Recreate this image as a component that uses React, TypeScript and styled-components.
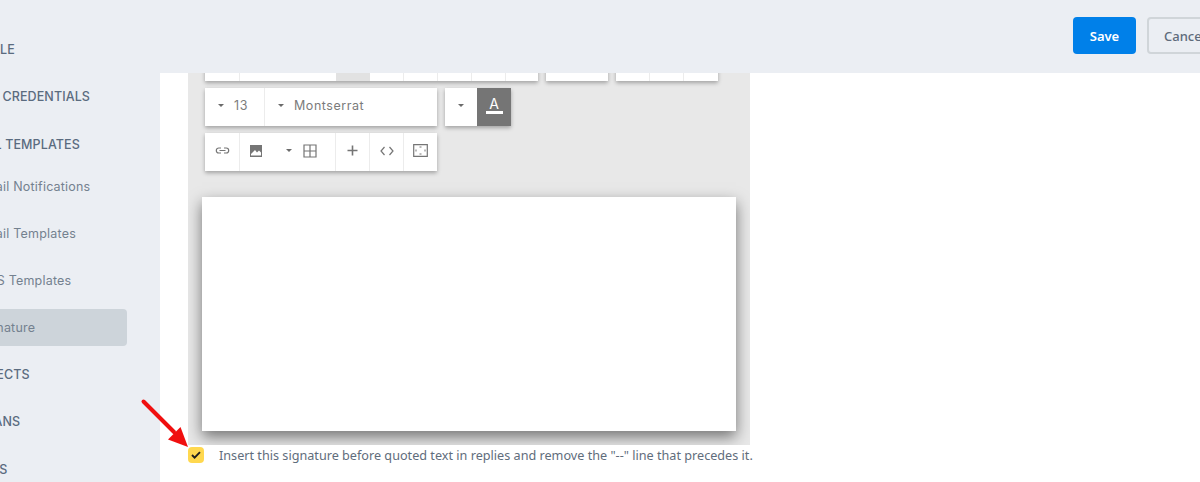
import React from 'react'
import styled, { createGlobalStyle } from 'styled-components'

const GlobalStyle = createGlobalStyle`
    html, body {
        margin: 0;
        padding: 0;
        background: #fff;
        overflow: hidden;
    }
`

const StyledPage = styled.div`
    position: relative;
    width: 1200px;
    height: 482px;
    display: flex;
    overflow: hidden;
    background: #fff;
`

const StyledSidebar = styled.div`
    width: 160px;
    height: 100%;
    flex-shrink: 0;
    background: #ebeef3;
    overflow: hidden;
    padding-top: 31px;
    box-sizing: border-box;
`

const StyledNavList = styled.div`
    width: 167px;
    margin-left: -40px;
    display: flex;
    flex-direction: column;
`

const StyledNavItem = styled.div<{ $sub?: boolean; $active?: boolean; $parent?: boolean }>`
    height: 37px;
    margin-bottom: ${props => (props.$parent ? '5.5px' : props.$sub ? '10px' : '10.25px')};
    display: flex;
    align-items: center;
    box-sizing: border-box;
    white-space: nowrap;
    border-radius: 4px;
    font-family: Inter, 'Noto Sans', sans-serif;
    padding-left: ${props => (props.$sub ? '17px' : '3px')};
    font-size: 12.5px;
    font-weight: ${props => (props.$sub ? 400 : 500)};
    letter-spacing: ${props => (props.$sub ? '0.2px' : '0.1px')};
    color: ${props => (props.$sub ? '#74818f' : '#5a6b7f')};
    background: ${props => (props.$active ? '#cdd4da' : 'transparent')};
`

const StyledRight = styled.div`
    flex: 1;
    min-width: 0;
    display: flex;
    flex-direction: column;
`

const StyledHeader = styled.div`
    height: 73px;
    flex-shrink: 0;
    background: #ebeef3;
    display: flex;
    align-items: flex-start;
    padding: 17px 0 0 913px;
    box-sizing: border-box;
    gap: 11px;
    overflow: hidden;
`

const StyledSave = styled.div`
    width: 63px;
    height: 37px;
    flex-shrink: 0;
    border-radius: 4px;
    background: #0080e9;
    color: #fff;
    font-family: 'Noto Sans', sans-serif;
    font-size: 13px;
    font-weight: 600;
    display: flex;
    align-items: center;
    justify-content: center;
`

const StyledCancel = styled.div`
    width: 72px;
    height: 37px;
    flex-shrink: 0;
    border-radius: 4px;
    border: 2px solid #d0d5d9;
    box-sizing: border-box;
    color: #5e6b7b;
    font-family: 'Noto Sans', sans-serif;
    font-size: 13px;
    font-weight: 500;
    display: flex;
    align-items: center;
    padding-left: 15px;
`

const StyledMain = styled.div`
    flex: 1;
    min-height: 0;
    overflow: hidden;
    padding-left: 28px;
`

const StyledEditor = styled.div`
    width: 562px;
    height: 372px;
    background: #e8e8e8;
    display: flex;
    flex-direction: column;
    overflow: hidden;
`

const StyledToolbars = styled.div`
    margin-top: -30px;
    padding-left: 17px;
    display: flex;
    flex-direction: column;
    gap: 7px;
`

const StyledToolbarRow = styled.div`
    display: flex;
    gap: 8px;
`

const StyledGroup = styled.div`
    height: 38px;
    display: flex;
    background: #fff;
    box-shadow: 0 2px 4px rgba(0, 0, 0, 0.3);
`

const StyledTool = styled.div<{ $width: number; $divider?: boolean; $active?: boolean; $dark?: boolean }>`
    width: ${props => props.$width}px;
    height: 100%;
    box-sizing: border-box;
    padding-bottom: 3px;
    display: flex;
    align-items: center;
    justify-content: center;
    gap: 10px;
    color: #7b7b7b;
    font-family: Inter, 'Noto Sans', sans-serif;
    font-size: 12.5px;
    letter-spacing: 0.55px;
    ${props => props.$divider && 'border-right: 1px solid #ececec;'}
    ${props => props.$active && 'background: #e2e2e2;'}
    ${props => props.$dark && 'background: #757575; color: #fff;'}
`

const StyledPlainTool = styled(StyledTool)`
    justify-content: flex-start;
    padding-left: 13px;
`

const StyledInsertTool = styled(StyledPlainTool)`
    padding-left: 9px;
    gap: 11px;
`

const StyledCaret = styled.span<{ $gapBefore?: number }>`
    width: 0;
    height: 0;
    flex-shrink: 0;
    margin-left: ${props => props.$gapBefore || 0}px;
    border-left: 3.5px solid transparent;
    border-right: 3.5px solid transparent;
    border-top: 3px solid #6b6b6b;
`

const StyledColorA = styled.span`
    width: 17px;
    box-sizing: border-box;
    padding-bottom: 1px;
    font-size: 14px;
    font-weight: 400;
    line-height: 12px;
    letter-spacing: 0;
    color: #fff;
    border-bottom: 3px solid #fff;
    text-align: center;
`

const StyledCanvas = styled.div`
    width: 534px;
    height: 234px;
    flex-shrink: 0;
    margin: 26px 0 0 14px;
    background: #fff;
    box-shadow: 0 6px 14px rgba(0, 0, 0, 0.5);
`

const StyledCheckRow = styled.div`
    display: flex;
    align-items: center;
    margin-top: 1px;
    gap: 15px;
    white-space: nowrap;
`

const StyledCheckbox = styled.div`
    width: 16px;
    height: 16px;
    border-radius: 4px;
    background: #ffd84f;
    display: flex;
    align-items: center;
    justify-content: center;
`

const StyledCheckLabel = styled.div`
    font-family: 'Noto Sans', sans-serif;
    font-size: 12.65px;
    color: #5f6d7c;
`

const StyledArrow = styled.svg`
    position: absolute;
    left: 138px;
    top: 396px;
`

const stroke = { fill: 'none', stroke: '#757575', strokeWidth: 1.2 }

const LinkIcon = () => (
    <svg width="15" height="15" viewBox="0 0 15 15">
        <path d="M6 5H3.8a2.5 2.5 0 0 0 0 5H6M9 5h2.2a2.5 2.5 0 0 1 0 5H9M4.5 7.5h6" {...stroke} />
    </svg>
)

const ImageIcon = () => (
    <svg width="14" height="14" viewBox="0 0 14 14">
        <path d="M1 1h12v12H1z M2 11.5h10V8.5L10 6.5 8 8.5 6 6 2 10z" fill="#757575" fillRule="evenodd" />
    </svg>
)

const TableIcon = () => (
    <svg width="14" height="14" viewBox="0 0 14 14">
        <path d="M1 1h12v12H1zM7 1v12M1 7h12" {...stroke} />
    </svg>
)

const PlusIcon = () => (
    <svg width="13" height="13" viewBox="0 0 13 13">
        <path d="M6.5 1.5v10M1.5 6.5h10" fill="none" stroke="#757575" strokeWidth="1.6" />
    </svg>
)

const CodeIcon = () => (
    <svg width="14" height="12" viewBox="0 0 14 12">
        <path d="M4.5 2L1 6l3.5 4M9.5 2L13 6l-3.5 4" {...stroke} />
    </svg>
)

const FullscreenIcon = () => (
    <svg width="15" height="13" viewBox="0 0 15 13">
        <path d="M.7.7h13.6v11.6H.7z" {...stroke} />
        <path d="M6.5 3h2M6.5 10h2M3 5.5v2M12 5.5v2" fill="none" stroke="#757575" strokeWidth="1" />
    </svg>
)

const navItems = [
    { label: 'PROFILE' },
    { label: 'SMTP CREDENTIALS' },
    { label: 'EMAIL TEMPLATES', parent: true },
    { label: 'Email Notifications', sub: true },
    { label: 'Email Templates', sub: true },
    { label: 'SMS Templates', sub: true },
    { label: 'Signature', sub: true, active: true },
    { label: 'PROJECTS' },
    { label: 'IT PLANS' },
    { label: 'TEAMS' },
]

const App = () => {
    return (
        <>
            <GlobalStyle />
            <StyledPage>
                <StyledSidebar>
                    <StyledNavList>
                        {navItems.map(item => (
                            <StyledNavItem key={item.label} $sub={item.sub} $active={item.active} $parent={item.parent}>
                                {item.label}
                            </StyledNavItem>
                        ))}
                    </StyledNavList>
                </StyledSidebar>

                <StyledRight>
                    <StyledHeader>
                        <StyledSave>Save</StyledSave>
                        <StyledCancel>Cancel</StyledCancel>
                    </StyledHeader>

                    <StyledMain>
                        <StyledEditor>
                            <StyledToolbars>
                                <StyledToolbarRow>
                                    <StyledGroup>
                                        <StyledTool $width={35} $divider />
                                        <StyledTool $width={96} />
                                        <StyledTool $width={34} $active />
                                        <StyledTool $width={34} $divider />
                                        <StyledTool $width={34} $divider />
                                        <StyledTool $width={34} $divider />
                                        <StyledTool $width={34} $divider />
                                        <StyledTool $width={32} />
                                    </StyledGroup>
                                    <StyledGroup>
                                        <StyledTool $width={62} />
                                    </StyledGroup>
                                    <StyledGroup>
                                        <StyledTool $width={34} $divider />
                                        <StyledTool $width={34} $divider />
                                        <StyledTool $width={34} />
                                    </StyledGroup>
                                </StyledToolbarRow>

                                <StyledToolbarRow>
                                    <StyledGroup>
                                        <StyledPlainTool $width={60} $divider>
                                            <StyledCaret />
                                            13
                                        </StyledPlainTool>
                                        <StyledPlainTool $width={172}>
                                            <StyledCaret />
                                            Montserrat
                                        </StyledPlainTool>
                                    </StyledGroup>
                                    <StyledGroup>
                                        <StyledTool $width={32}>
                                            <StyledCaret />
                                        </StyledTool>
                                        <StyledTool $width={34} $dark>
                                            <StyledColorA>A</StyledColorA>
                                        </StyledTool>
                                    </StyledGroup>
                                </StyledToolbarRow>

                                <StyledToolbarRow>
                                    <StyledGroup>
                                        <StyledTool $width={35} $divider>
                                            <LinkIcon />
                                        </StyledTool>
                                        <StyledInsertTool $width={96} $divider>
                                            <ImageIcon />
                                            <StyledCaret $gapBefore={12} />
                                            <TableIcon />
                                        </StyledInsertTool>
                                        <StyledTool $width={34} $divider>
                                            <PlusIcon />
                                        </StyledTool>
                                        <StyledTool $width={34} $divider>
                                            <CodeIcon />
                                        </StyledTool>
                                        <StyledTool $width={33}>
                                            <FullscreenIcon />
                                        </StyledTool>
                                    </StyledGroup>
                                </StyledToolbarRow>
                            </StyledToolbars>

                            <StyledCanvas />
                        </StyledEditor>

                        <StyledCheckRow>
                            <StyledCheckbox>
                                <svg width="10" height="8" viewBox="0 0 10 8">
                                    <path d="M1 4l2.6 2.6L9 1.2" fill="none" stroke="#1f1f1f" strokeWidth="1.9" />
                                </svg>
                            </StyledCheckbox>
                            <StyledCheckLabel>
                                Insert this signature before quoted text in replies and remove the "--" line that precedes it.
                            </StyledCheckLabel>
                        </StyledCheckRow>
                    </StyledMain>
                </StyledRight>

                <StyledArrow width="54" height="54" viewBox="0 0 54 54">
                    <path d="M5.5 5.5L36 36" stroke="#f00f0f" strokeWidth="4" strokeLinecap="round" fill="none" />
                    <path d="M50 51L30 43.5L42.5 31z" fill="#f00f0f" />
                </StyledArrow>
            </StyledPage>
        </>
    )
}

export default App
